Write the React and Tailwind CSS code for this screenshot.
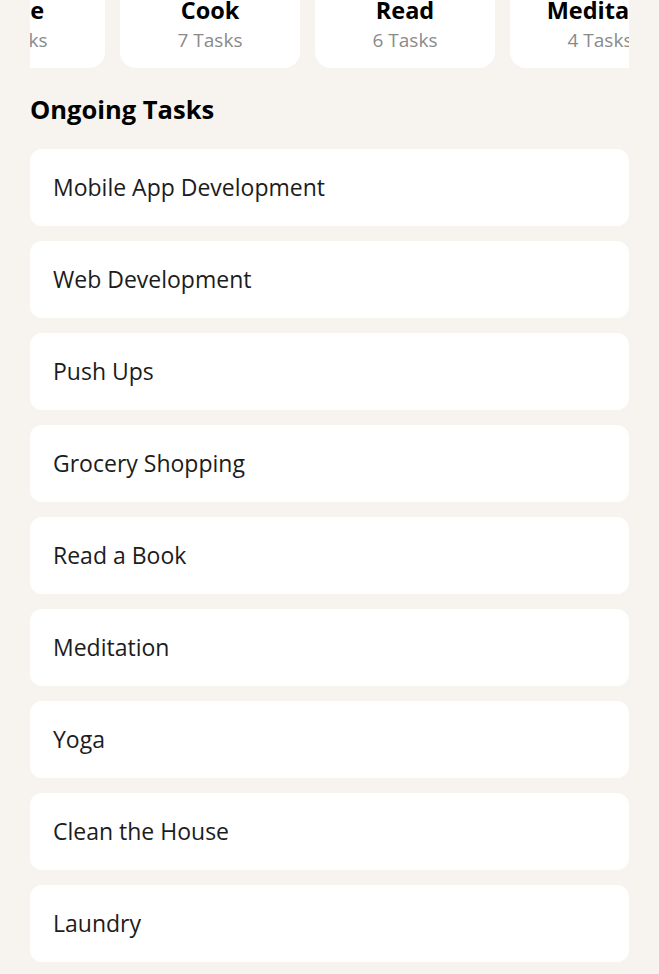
import { useEffect, useRef } from 'react';

const categories = [
  { name: "Exercise", count: 12 },
  { name: "Code", count: 8 },
  { name: "Cook", count: 7 },
  { name: "Read", count: 6 },
  { name: "Meditate", count: 4 },
  { name: "Yoga", count: 3 },
];

const tasks = [
  "Mobile App Development",
  "Web Development",
  "Push Ups",
  "Grocery Shopping",
  "Read a Book",
  "Meditation",
  "Yoga",
  "Clean the House",
  "Laundry",
];

export default function App() {
  const rowRef = useRef(null);

  useEffect(() => {
    if (rowRef.current) rowRef.current.scrollLeft = 300;
  }, []);

  return (
    <div className="min-h-screen bg-[#f7f4f0] px-[30px] pb-3 font-['Open_Sans',sans-serif] overflow-hidden">
      {/* Categories (scrolled) */}
      <div
        ref={rowRef}
        className="-mt-[24px] flex gap-[15px] overflow-x-auto [scrollbar-width:none]"
      >
        {categories.map((c) => (
          <div
            key={c.name}
            className="flex w-[180px] shrink-0 flex-col items-center rounded-2xl bg-white pt-5 pb-[14px]"
          >
            <span className="text-[23.5px] font-bold leading-7 text-black">{c.name}</span>
            <span className="mt-[2px] text-[19px] leading-7 text-[#8a8a8a]">{c.count} Tasks</span>
          </div>
        ))}
      </div>

      {/* Ongoing */}
      <h2 className="mt-[25px] mb-6 text-[25.5px] font-bold leading-8 text-black">Ongoing Tasks</h2>
      <ul className="flex flex-col gap-[15px]">
        {tasks.map((t) => (
          <li
            key={t}
            className="flex h-[77px] items-center rounded-xl bg-white px-[23px] text-[23px] text-[#1c1c1c]"
          >
            {t}
          </li>
        ))}
      </ul>
    </div>
  );
}
